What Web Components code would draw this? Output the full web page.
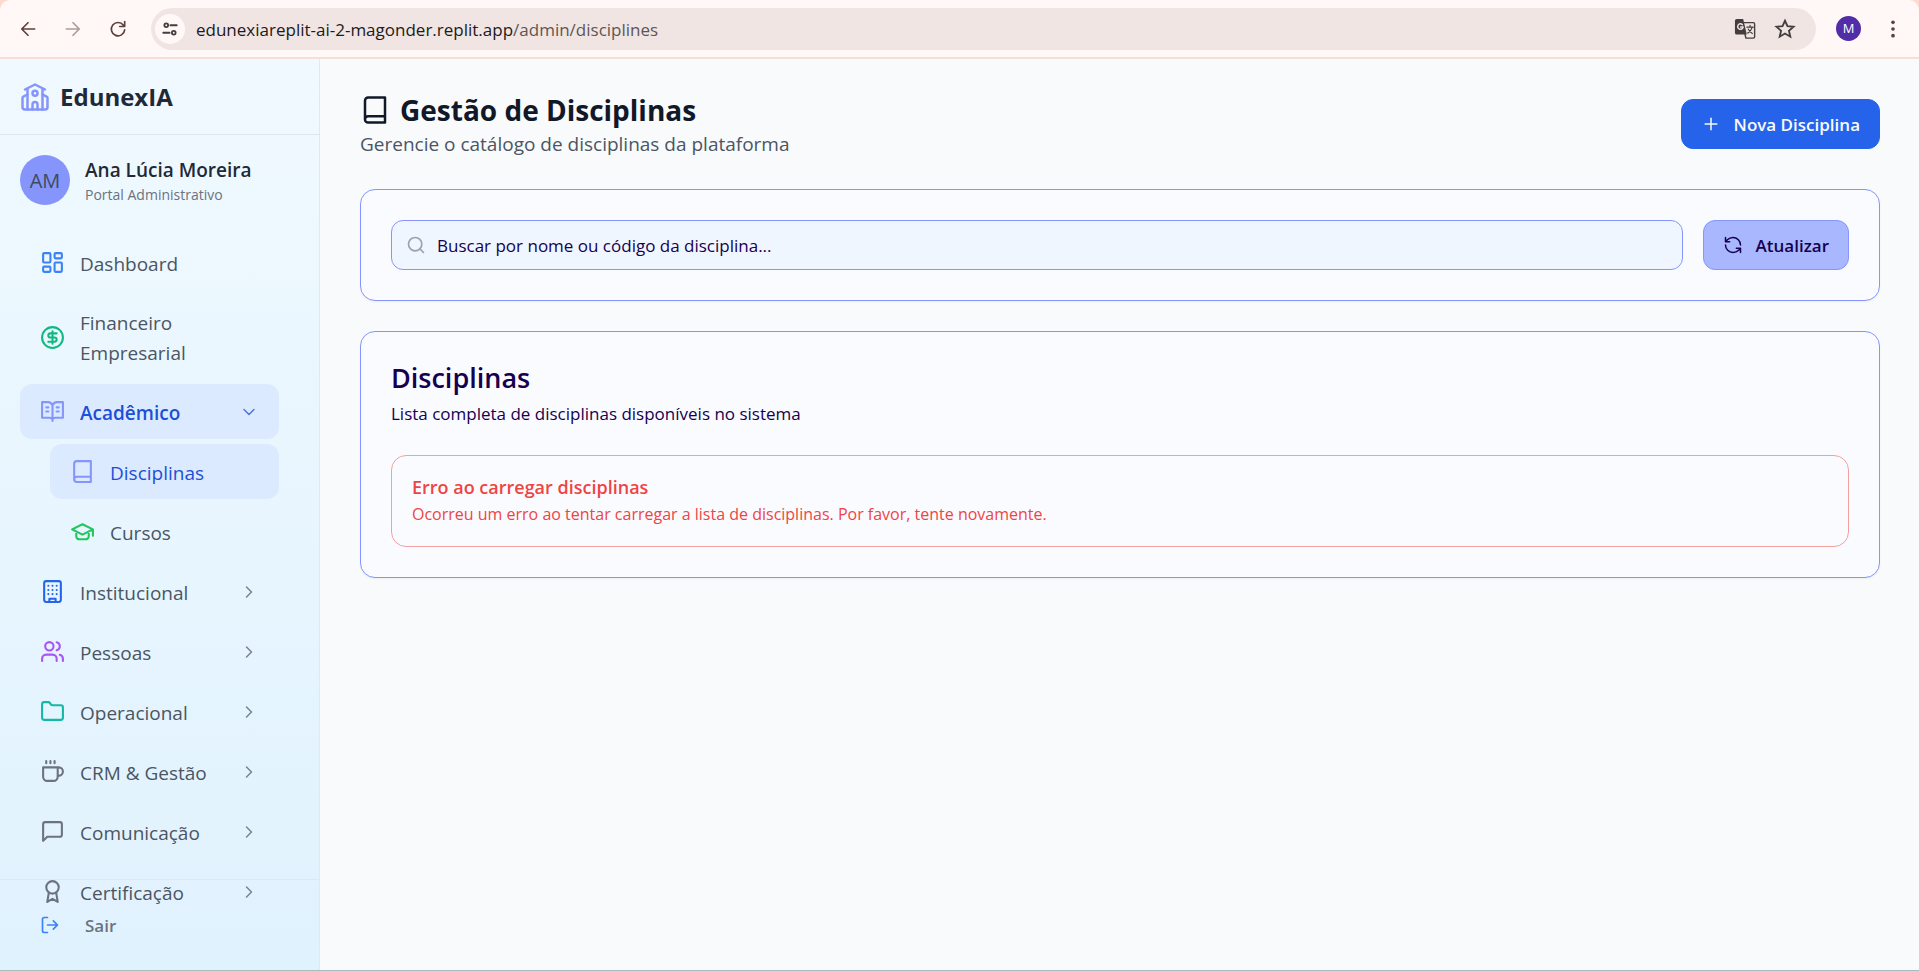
<!DOCTYPE html>
<html lang="pt-BR">
<head>
<meta charset="utf-8">
<title>EdunexIA – Gestão de Disciplinas</title>
<style>
  html, body { margin: 0; height: 100%; }
  body { font-family: "Open Sans", "Noto Sans", sans-serif; color: #4b5563; background: #f8fafc; }
</style>
</head>
<body>
<app-shell>
  <browser-bar slot="bar"></browser-bar>
  <side-bar slot="side"></side-bar>
  <disciplines-page></disciplines-page>
</app-shell>

<script>
const ICONS = {
  school: '<path d="M14 22v-4a2 2 0 1 0-4 0v4M18 5v17M6 5v17m-2-16 8-4 8 4"/><path d="m18 10 3.4 1.7a1 1 0 0 1 .6.9V20a2 2 0 0 1-2 2H4a2 2 0 0 1-2-2v-7.400a1 1 0 0 1 .6-.9L6 10"/><circle cx="12" cy="9" r="2"/>',
  dashboard: '<rect x="3" y="3" width="7" height="9" rx="1"/><rect x="14" y="3" width="7" height="5" rx="1"/><rect x="14" y="12" width="7" height="9" rx="1"/><rect x="3" y="16" width="7" height="5" rx="1"/>',
  dollar: '<circle cx="12" cy="12" r="10"/><path d="M16 8h-6a2 2 0 1 0 0 4h4a2 2 0 1 1 0 4H8M12 18V6"/>',
  bookOpen: '<path d="M12 6v15M12 6c-1-2-2.500-3-4-3H2v15h7c1.500 0 3 .6 3 2 0-1.400 1.500-2 3-2h7V3h-6c-1.500 0-3 1-4 3zM6 8h2M6 12h2M16 8h2M16 12h2"/>',
  book: '<path d="M4 19.500v-15A2.500 2.500 0 0 1 6.500 2H20v20H6.500a2.500 2.500 0 0 1 0-5H20"/>',
  cap: '<path d="M2 10l10-5 10 5-10 5zM22 10v6M6 12v4.500a3 3 0 0 0 3 3h6a3 3 0 0 0 3-3V12"/>',
  building: '<rect x="4" y="2" width="16" height="20" rx="2"/><path d="M9 22v-3h6v3M8 6.500h.01M16 6.500h.01M12 6.500h.01M12 10.500h.01M12 14.500h.01M16 10.500h.01M16 14.500h.01M8 10.500h.01M8 14.500h.01"/>',
  users: '<path d="M16 21v-2a4 4 0 0 0-4-4H6a4 4 0 0 0-4 4v2"/><circle cx="9" cy="7" r="4"/><path d="M22 21v-2a4 4 0 0 0-3-3.870M16 3.130a4 4 0 0 1 0 7.750"/>',
  folder: '<path d="M20 20a2 2 0 0 0 2-2V8a2 2 0 0 0-2-2h-7.900a2 2 0 0 1-1.690-.9L9.600 3.900A2 2 0 0 0 7.930 3H4a2 2 0 0 0-2 2v13a2 2 0 0 0 2 2z"/>',
  coffee: '<path d="M17 8h1a4 4 0 1 1 0 8h-1M3 8h14v9a4 4 0 0 1-4 4H7a4 4 0 0 1-4-4zM6 2v2M10 2v2M14 2v2"/>',
  message: '<path d="M21 15a2 2 0 0 1-2 2H7l-4 4V5a2 2 0 0 1 2-2h14a2 2 0 0 1 2 2z"/>',
  award: '<circle cx="12" cy="8" r="6"/><path d="M15.480 12.890 17 22l-5-3-5 3 1.520-9.110"/>',
  logout: '<path d="M9 21H5a2 2 0 0 1-2-2V5a2 2 0 0 1 2-2h4M16 17l5-5-5-5M21 12H9"/>',
  down: '<path d="m6 9 6 6 6-6"/>',
  right: '<path d="m9 18 6-6-6-6"/>',
  plus: '<path d="M5 12h14M12 5v14"/>',
  search: '<circle cx="11" cy="11" r="8"/><path d="m21 21-4.300-4.300"/>',
  refresh: '<path d="M21 12a9 9 0 0 0-9-9 9.750 9.750 0 0 0-6.740 2.740L3 8M3 3v5h5M3 12a9 9 0 0 0 9 9 9.750 9.750 0 0 0 6.740-2.740L21 16M16 16h5v5"/>',
  back: '<path d="M20 12H5M12 4.500 4.500 12l7.500 7.500"/>',
  forward: '<path d="M4 12h15M12 4.500l7.500 7.500-7.500 7.500"/>',
  reload: '<path d="M18.500 7.500A8 8 0 1 0 20 13M20 3v6h-6"/>',
  tune: '<circle cx="7" cy="7" r="2.500"/><path d="M12.500 7H21M3 17h8.500"/><circle cx="17" cy="17" r="2.500"/>',
  star: '<path stroke-linejoin="miter" d="m12 3 2.700 6 6.600.6-5 4.300 1.500 6.500-5.800-3.500-5.800 3.500 1.500-6.500-5-4.300 6.600-.6z"/>',
  dots: '<g fill="currentColor" stroke="none"><circle cx="12" cy="4" r="2.200"/><circle cx="12" cy="12" r="2.200"/><circle cx="12" cy="20" r="2.200"/></g>',
  translate: '<path fill="currentColor" stroke="none" d="M3 1h7l4 17H3a2 2 0 0 1-2-2V3a2 2 0 0 1 2-2z"/><path d="M11 5h10a1.500 1.500 0 0 1 1.500 1.500v14A1.500 1.500 0 0 1 21 22h-8l-1-4" stroke-width="1.500"/><path d="M14 10h7M17.500 8v2M20 10c-1 3-2.500 5-5 6.500M15.500 12c1 2 2.500 4 4.500 5" stroke-width="1.300"/><path d="M9.200 7.300A3 3 0 1 0 10 9.700H7.200" stroke="#f1e5e4" stroke-width="1.600"/>'
};

/* Registers an element whose shadow root is cloned from the given markup. */
function define(name, markup, setup) {
  const tpl = document.createElement('template');
  tpl.innerHTML = '<style>*,:host{box-sizing:border-box}</style>' + markup;
  customElements.define(name, class extends HTMLElement {
    constructor() {
      super();
      this.attachShadow({ mode: 'open' }).append(tpl.content.cloneNode(true));
    }
    connectedCallback() { if (setup) setup(this, this.shadowRoot); }
  });
}

customElements.define('ui-icon', class extends HTMLElement {
  static observedAttributes = ['name'];
  constructor() {
    super();
    this.attachShadow({ mode: 'open' }).innerHTML = `
      <style>
        :host { display: block; flex: none; width: var(--size, 25px); height: var(--size, 25px); }
        svg { display: block; width: 100%; height: 100%; fill: none; stroke: currentColor;
              stroke-width: var(--stroke, 2); stroke-linecap: round; stroke-linejoin: round; }
      </style>
      <svg viewBox="0 0 24 24" aria-hidden="true"></svg>`;
  }
  attributeChangedCallback(_, __, name) {
    this.shadowRoot.querySelector('svg').innerHTML = ICONS[name] || '';
  }
});

define('app-shell', `
  <style>
    :host { display: grid; grid-template: auto 1fr / 320px 1fr; height: 100vh; border-bottom: 1px solid #a8bdbb; }
    slot[name=bar] { display: block; grid-column: 1 / -1; }
    slot[name=side] { display: grid; min-height: 0; }
    main { min-width: 0; background: #f8fafc; }
  </style>
  <slot name="bar"></slot>
  <slot name="side"></slot>
  <main><slot></slot></main>`);

define('browser-bar', `
  <style>
    :host { display: block; background: #fdd9d0; }
    .bar { display: flex; align-items: center; height: 59px; padding: 0 16px; background: #fff8f6;
           border-bottom: 2px solid #f6ded9; border-radius: 10px 10px 0 0; color: #5c4039; }
    button { border: 0; padding: 0; background: none; color: inherit; font: inherit; display: grid; place-items: center; flex: none; }
    .nav { display: flex; gap: 21px; margin-right: 21px; --size: 20px; }
    .nav button { width: 24px; }
    .off { opacity: .5; }
    .address { flex: 1; display: flex; align-items: center; height: 42px; border-radius: 21px; background: #f1e5e4;
               padding: 0 20px 0 4px; margin-right: 20px; color: #443f3e; }
    .tune { width: 30px; height: 30px; border-radius: 50%; background: #fff8f6; margin-right: 11px; --size: 18px; --stroke: 2.4; }
    .url { flex: 1; font-size: 17px; line-height: 24px; padding-top: 2px; color: #5e5553; }
    .url b { font-weight: 400; color: #201a19; }
    .tools { display: flex; gap: 18px; --size: 22px; }
    .avatar { width: 25px; height: 25px; border-radius: 50%; background: #512da8; color: #fff; font-size: 13px; line-height: 25px; }
    .menu { margin-left: 22px; --size: 20px; }
  </style>
  <div class="bar">
    <div class="nav">
      <button aria-label="Voltar"><ui-icon name="back"></ui-icon></button>
      <button class="off" aria-label="Avançar"><ui-icon name="forward"></ui-icon></button>
      <button aria-label="Recarregar"><ui-icon name="reload"></ui-icon></button>
    </div>
    <div class="address">
      <button class="tune" aria-label="Informações do site"><ui-icon name="tune"></ui-icon></button>
      <span class="url"><b>edunexiareplit-ai-2-magonder.replit.app</b>/admin/disciplines</span>
      <div class="tools">
        <button aria-label="Traduzir"><ui-icon name="translate"></ui-icon></button>
        <button aria-label="Favoritar"><ui-icon name="star"></ui-icon></button>
      </div>
    </div>
    <button class="avatar">M</button>
    <button class="menu" aria-label="Menu"><ui-icon name="dots"></ui-icon></button>
  </div>`);

define('nav-item', `
  <style>
    :host { display: block; }
    :host([sub]) { margin-left: 30px; }
    a { display: flex; align-items: center; gap: 15px; min-height: 55px; padding: 11px 20px; border-radius: 12px;
        color: #4b5563; text-decoration: none; font-size: 19px; line-height: 30px; }
    span { flex: 1; padding-top: 2px; }
    .lead { color: var(--tint, #6b7280); }
    .chev { --size: 20px; --stroke: 1.8; color: #78838f; }
    :host([active]) a { background: #dbeafe; color: #1d4ed8; }
    :host([open]) a { font-weight: 600; }
    :host([open]) .chev { color: #4f76e0; }
  </style>
  <a href="#"><ui-icon class="lead"></ui-icon><span><slot></slot></span></a>`,
  (el, root) => {
    root.querySelector('.lead').setAttribute('name', el.getAttribute('icon'));
    const chevron = el.getAttribute('chevron');
    if (chevron && !root.querySelector('.chev')) {
      const icon = document.createElement('ui-icon');
      icon.className = 'chev';
      icon.setAttribute('name', chevron);
      root.querySelector('a').append(icon);
    }
  });

define('side-bar', `
  <style>
    :host { display: flex; flex-direction: column; position: relative; min-height: 0;
            background: linear-gradient(#f0f9ff, #e0f2fe); border-right: 1px solid #dbe8fd; }
    header { display: flex; align-items: center; gap: 10px; height: 76px; padding: 0 20px; border-bottom: 1px solid #dfe6f0; }
    header ui-icon { --size: 30px; color: #8595fc; }
    h2 { margin: 0; font-size: 24px; line-height: 36px; font-weight: 700; color: #1f2937; }
    .user { display: flex; align-items: center; gap: 15px; height: 90px; padding: 0 20px; }
    .avatar { flex: none; width: 50px; height: 50px; padding-top: 2px; border-radius: 50%; background: #8595fc;
              text-align: center; line-height: 48px; font-size: 20px; color: #414a5c; }
    .who { padding-top: 3px; }
    .name { font-size: 19px; line-height: 26px; font-weight: 600; color: #1f2937; white-space: nowrap; }
    .role { font-size: 14px; line-height: 23px; color: #6b7280; }
    nav { display: grid; gap: 5px; padding: 10px 40px 0 20px; }
    footer { position: absolute; left: 0; right: 0; bottom: 0; padding: 20px; border-top: 1px solid #e2e6f0; }
    footer button { display: flex; align-items: center; gap: 25px; width: 100%; height: 50px; border: 0; padding: 0 20px; background: none;
                    font: 600 17px/24px "Open Sans", sans-serif; color: #6b7280; }
    footer span { padding-top: 2px; }
    footer ui-icon { --size: 20px; color: #3b82f6; }
  </style>
  <header><ui-icon name="school"></ui-icon><h2>EdunexIA</h2></header>
  <div class="user">
    <div class="avatar">AM</div>
    <div class="who"><div class="name">Ana Lúcia Moreira</div><div class="role">Portal Administrativo</div></div>
  </div>
  <nav>
    <nav-item icon="dashboard" style="--tint:#3b82f6">Dashboard</nav-item>
    <nav-item icon="dollar" style="--tint:#10b981">Financeiro Empresarial</nav-item>
    <nav-item icon="bookOpen" style="--tint:#8595fc" chevron="down" active open>Acadêmico</nav-item>
    <nav-item icon="book" style="--tint:#8595fc" sub active>Disciplinas</nav-item>
    <nav-item icon="cap" style="--tint:#22c55e" sub>Cursos</nav-item>
    <nav-item icon="building" style="--tint:#2563eb" chevron="right">Institucional</nav-item>
    <nav-item icon="users" style="--tint:#a855f7" chevron="right">Pessoas</nav-item>
    <nav-item icon="folder" style="--tint:#14b8a6" chevron="right">Operacional</nav-item>
    <nav-item icon="coffee" chevron="right">CRM &amp; Gestão</nav-item>
    <nav-item icon="message" chevron="right">Comunicação</nav-item>
    <nav-item icon="award" chevron="right">Certificação</nav-item>
  </nav>
  <footer><button><ui-icon name="logout"></ui-icon><span>Sair</span></button></footer>`);

define('ui-button', `
  <style>
    :host { display: block; flex: none; }
    button { display: flex; align-items: center; gap: 13px; height: 50px; padding: 0 19px; border: 1px solid var(--line, #2563eb);
             border-radius: 12px; background: var(--fill, #2563eb); color: var(--ink, #f8fafc);
             font: 600 17px/24px "Open Sans", sans-serif; white-space: nowrap; }
    span { padding-top: 2px; }
    ui-icon { --size: 20px; --stroke: 1.8; }
    :host([soft]) { --fill: #a9b7ff; --line: #8595fc; --ink: #160050; }
  </style>
  <button><ui-icon></ui-icon><span><slot></slot></span></button>`,
  (el, root) => root.querySelector('ui-icon').setAttribute('name', el.getAttribute('icon')));

define('ui-card', `
  <style>
    :host { display: block; padding: 30px; border: 1px solid #8595fc; border-radius: 15px; background: #fafbff; box-shadow: 0 1px 2px rgb(0 0 0 / 5%); }
  </style>
  <slot></slot>`);

define('error-alert', `
  <style>
    :host { display: block; padding: 18px 20px; border: 1px solid #f5a0a0; border-radius: 15px; color: #ef4444; }
    h4 { margin: 0; font-size: 18px; line-height: 26px; font-weight: 600; }
    p { margin: 0; font-size: 16px; line-height: 28px; }
  </style>
  <div role="alert"><h4><slot name="title"></slot></h4><p><slot></slot></p></div>`);

define('disciplines-page', `
  <style>
    :host { display: grid; gap: 30px; padding: 30px 39px 40px 40px; }
    header { display: flex; align-items: center; justify-content: space-between; height: 70px; }
    .heading { padding-top: 2px; }
    h1 { display: flex; align-items: center; gap: 10px; margin: 0; font-size: 28px; line-height: 38px; font-weight: 700; color: #111827; }
    h1 ui-icon { --size: 30px; }
    header p { margin: 0; font-size: 19px; line-height: 30px; }
    form { display: flex; gap: 20px; }
    label { flex: 1; display: flex; align-items: center; gap: 11px; height: 50px; padding: 0 14px; border: 1px solid #8595fc;
            border-radius: 12px; background: #eff6ff; color: #9ca3af; --size: 20px; }
    input { flex: 1; min-width: 0; border: 0; padding: 2px 0 0; outline: 0; background: none; font: 17px/24px "Open Sans", sans-serif; color: #160050; }
    input::placeholder { color: #160050; opacity: 1; }
    h3 { margin: 0; font-size: 27px; line-height: 32px; font-weight: 600; color: #160050; }
    .desc { margin: 8px 0 29px; font-size: 17px; line-height: 24px; color: #160050; }
  </style>
  <header>
    <div class="heading">
      <h1><ui-icon name="book"></ui-icon>Gestão de Disciplinas</h1>
      <p>Gerencie o catálogo de disciplinas da plataforma</p>
    </div>
    <ui-button icon="plus">Nova Disciplina</ui-button>
  </header>
  <ui-card>
    <form>
      <label><ui-icon name="search"></ui-icon><input type="text" aria-label="Buscar disciplinas" placeholder="Buscar por nome ou código da disciplina..."></label>
      <ui-button icon="refresh" soft>Atualizar</ui-button>
    </form>
  </ui-card>
  <ui-card>
    <h3>Disciplinas</h3>
    <p class="desc">Lista completa de disciplinas disponíveis no sistema</p>
    <error-alert><span slot="title">Erro ao carregar disciplinas</span>Ocorreu um erro ao tentar carregar a lista de disciplinas. Por favor, tente novamente.</error-alert>
  </ui-card>`);
</script>
</body>
</html>
